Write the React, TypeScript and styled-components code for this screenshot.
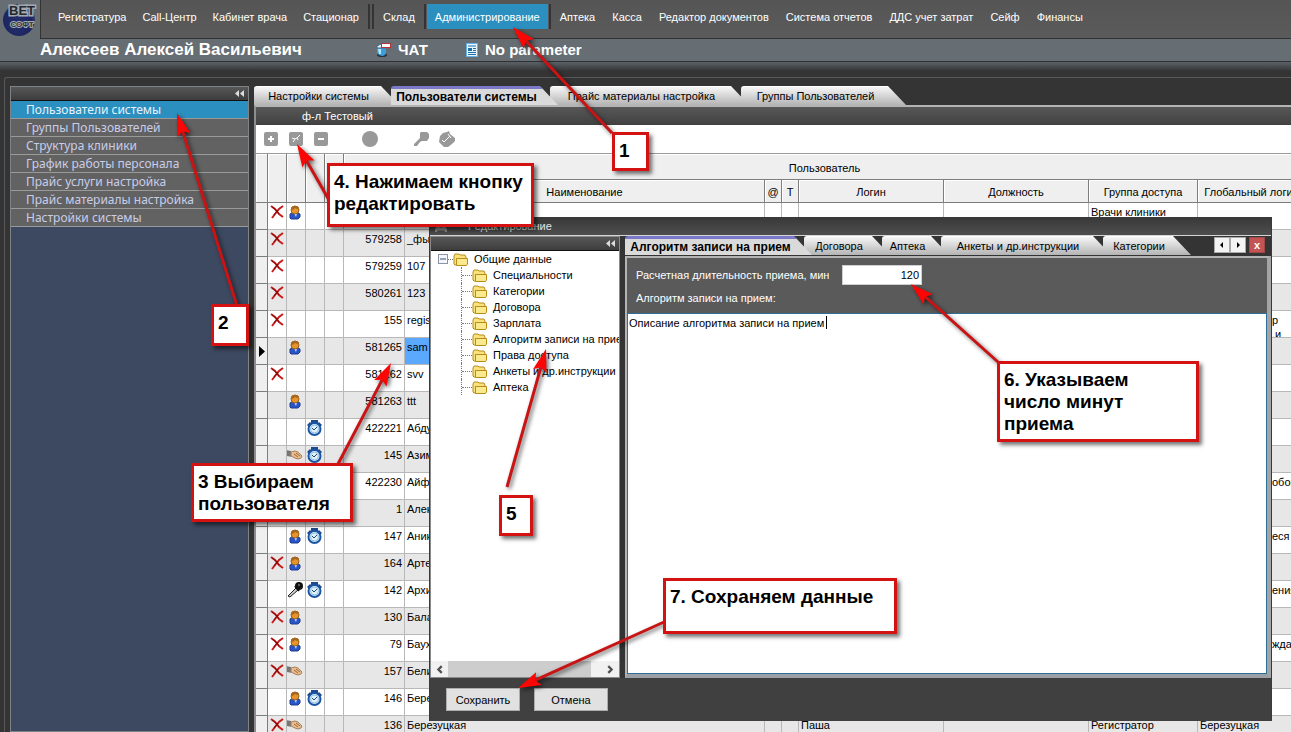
import React from "react";
import styled, { createGlobalStyle, css } from "styled-components";

const UI = '"Liberation Sans", Arial, sans-serif';
const HUMANIST = '"Noto Sans", "Open Sans", sans-serif';

const GlobalStyle = createGlobalStyle`
  *, *::before, *::after { box-sizing: border-box; }
  html, body { margin: 0; padding: 0; }
  body { font: 11px/14px ${UI}; color: #000; background: #343434; overflow: hidden; }
  button, input, textarea { font: inherit; color: inherit; margin: 0; border-radius: 0; }
  button { cursor: pointer; }
  svg { flex: none; }
  ul { list-style: none; margin: 0; padding: 0; }
`;

/* ---------- application frame ---------- */

const Page = styled.div`
  position: relative;
  display: flex;
  flex-direction: column;
  height: 100vh;
  overflow: hidden;
`;

const Header = styled.header`
  display: grid;
  grid-template-columns: 40px minmax(0, 1fr);
  grid-template-rows: 39px 22px 10px;
  background: #666e73;
`;

const LogoBox = styled.div`
  grid-row: 1 / 3;
  svg { display: block; }
`;

const Nav = styled.nav`
  display: flex;
  align-items: flex-start;
  padding: 4px 0 0 9px;
  overflow: hidden;
  background: linear-gradient(#555, #5b5b5b);
  border-left: 1px solid #333;
  border-bottom: 1px solid #2f3133;
`;

const NavGroup = styled.div<{ $gap?: number }>`
  display: flex;
  gap: ${(p) => p.$gap ?? 0}px;
`;

const NavButton = styled.button<{ $active?: boolean }>`
  height: 25px;
  padding: 0 8px;
  border: 0;
  white-space: nowrap;
  color: #fff;
  background: ${(p) => (p.$active ? "#2b8fbf" : "transparent")};
`;

const NavDivider = styled.span`
  width: 2px;
  height: 25px;
  margin: 0 1px;
  background: #343434;
`;

const StatusRow = styled.div`
  display: flex;
  align-items: center;
  color: #fff;
  font-weight: bold;
`;

const UserName = styled.div`
  width: 336px;
  font-size: 17px;
  line-height: 20px;
  white-space: nowrap;
`;

const StatusItem = styled.div<{ $width: number }>`
  display: flex;
  align-items: center;
  gap: 7px;
  width: ${(p) => p.$width}px;
  font-size: 15px;
  line-height: 20px;
  white-space: nowrap;
`;

const HeaderShade = styled.div`
  grid-column: 1 / 3;
  border-top: 1px solid #2d2f31;
  background: linear-gradient(#5c6268, #343434);
`;

const Workspace = styled.main`
  display: flex;
  flex: 1;
  min-height: 0;
  gap: 5px;
  margin: 6px 0 0 4px;
  padding: 8px 0 0 5px;
  border: 1px solid #595959;
  border-width: 1px 0 0 1px;
  border-radius: 3px 0 0 0;
`;

/* ---------- side menu ---------- */

const Sidebar = styled.aside`
  flex: 0 0 239px;
  border: 1px solid #7e8388;
  background: #3d4960;
`;

const PanelHead = styled.div`
  display: flex;
  align-items: center;
  justify-content: flex-end;
  height: 14px;
  padding-right: 4px;
  border-bottom: 1px solid #111;
  background: linear-gradient(#575757, #3d3d3d);
`;

const CollapseButton = styled.button`
  display: flex;
  padding: 0;
  border: 0;
  background: none;
`;

const MenuItem = styled.button<{ $active?: boolean }>`
  display: block;
  width: 100%;
  height: 18px;
  padding: 0 15px;
  border: 0;
  border-bottom: 1px solid #9a9a9a;
  text-align: left;
  font-family: ${HUMANIST};
  font-size: 12px;
  line-height: 16px;
  color: ${(p) => (p.$active ? "#e6f3ff" : "#c9cdea")};
  background: ${(p) => (p.$active ? "#2b8fbf" : "#626262")};
`;

/* ---------- tabs ---------- */

const Content = styled.section`
  display: flex;
  flex-direction: column;
  flex: 1;
  min-width: 0;
`;

const TabStrip = styled.div`
  display: flex;
  height: 19px;
  isolation: isolate;
`;

const Tab = styled.button<{ $width: number; $active?: boolean; $order: number }>`
  flex: 0 0 ${(p) => p.$width}px;
  height: 19px;
  padding: 0 16px 0 0;
  border: 0;
  border-top: 1px solid #fff;
  border-radius: 3px 0 0 0;
  white-space: nowrap;
  background: linear-gradient(#f6f6f6, #b4b4b4);
  clip-path: polygon(0 0, calc(100% - 18px) 0, 100% 100%, 0 100%);
  z-index: ${(p) => 10 - p.$order};
  & + & { margin-left: -8px; }
  ${(p) =>
    p.$active &&
    css`
      z-index: 20;
      border-top: 3px solid #7b78c8;
      font-size: 12px;
      font-weight: bold;
      background: #dadada;
    `}
`;

const ListPane = styled.div`
  display: flex;
  flex-direction: column;
  flex: 1;
  min-height: 0;
  border-left: 2px solid #8d8d8d;
  border-top: 2px solid #b4b4b4;
  background: #fff;
`;

const BranchBar = styled.div`
  height: 18px;
  padding-left: 46px;
  line-height: 18px;
  color: #fff;
  background: linear-gradient(#575757, #414141);
`;

const Toolbar = styled.div`
  display: flex;
  align-items: center;
  height: 28px;
  padding-left: 8px;
`;

const ToolButton = styled.button<{ $space: number }>`
  display: flex;
  padding: 0;
  margin-right: ${(p) => p.$space}px;
  border: 0;
  background: none;
`;

/* ---------- users table ---------- */

const TableArea = styled.div`
  flex: 1;
  min-height: 0;
  overflow: hidden;
  border-top: 1px solid #9a9a9a;
`;

const UsersTable = styled.table`
  width: 1050px;
  min-width: 100%;
  table-layout: fixed;
  border-collapse: separate;
  border-spacing: 0;
`;

const HeadCell = styled.th`
  padding: 2px 0 0;
  border-right: 1px solid #7d7d7d;
  border-bottom: 1px solid #7d7d7d;
  box-shadow: inset 1px 1px #fff;
  background: #efefef;
  font-weight: normal;
  white-space: nowrap;
`;

const Row = styled.tr<{ $shaded: boolean }>`
  height: 27px;
  background: ${(p) => (p.$shaded ? "#e7e7e7" : "#fff")};
`;

const Cell = styled.td<{ $kind?: "mark" | "icon" | "number"; $selected?: boolean }>`
  height: 27px;
  padding: 2px 2px 0;
  overflow: hidden;
  white-space: nowrap;
  vertical-align: top;
  border-right: 1px solid #b8b8b8;
  border-bottom: 1px solid #b8b8b8;
  svg { display: block; }
  ${(p) =>
    p.$kind === "mark" &&
    css`
      padding: 0 3px;
      vertical-align: middle;
      border-color: #7d7d7d;
      background: #efefef;
    `}
  ${(p) => p.$kind === "icon" && css`padding: 0;`}
  ${(p) => p.$kind === "number" && css`text-align: right;`}
  ${(p) => p.$selected && css`background: #5aa9ff;`}
`;

const Tail = styled.span`
  display: block;
  height: 24px;
  padding-left: 72px;
  white-space: pre;
`;

/* ---------- edit window ---------- */

const Dialog = styled.section`
  position: absolute;
  left: 429px;
  right: 19px;
  top: 217px;
  bottom: 11px;
  display: flex;
  flex-direction: column;
  border: 1px solid #3a3a3a;
  border-width: 0 1px;
  background: #404040;
`;

const TitleBar = styled.div`
  display: flex;
  align-items: center;
  height: 19px;
  gap: 21px;
  padding-left: 5px;
  color: #e4e4e4;
  border-bottom: 1px solid #d5d5d5;
  background: linear-gradient(#383838, #4e4e4e);
`;

const DialogBody = styled.div`
  display: flex;
  flex: 1;
  min-height: 0;
  gap: 5px;
  background: #343434;
`;

const TreePane = styled.div`
  display: flex;
  flex-direction: column;
  flex: 0 0 190px;
  overflow: hidden;
  border: 1px solid #8a8a8a;
  background: #fff;
`;

const Tree = styled.div`
  flex: 1;
  overflow: hidden;
`;

const TreeRoot = styled.div`
  display: flex;
  align-items: center;
  height: 16px;
  padding-left: 7px;
`;

const Dots = styled.span<{ $width: number }>`
  flex: 0 0 ${(p) => p.$width}px;
  border-top: 1px dotted #777;
`;

const Branch = styled.ul`
  margin-left: 30px;
`;

const Leaf = styled.li`
  display: flex;
  align-items: center;
  height: 16px;
  white-space: nowrap;
  border-left: 1px dotted #777;
`;

const NodeLabel = styled.span`
  padding-left: 6px;
`;

const HScroll = styled.div`
  display: grid;
  grid-template-columns: 17px 143px 1fr 17px;
  height: 16px;
  background: #f1f1f1;
`;

const ScrollButton = styled.button`
  display: flex;
  align-items: center;
  justify-content: center;
  grid-row: 1;
  padding: 0;
  border: 0;
  background: none;
  &:last-child { grid-column: 4; }
`;

const Thumb = styled.div`
  background: #cdcdcd;
`;

const EditorPane = styled.div`
  display: flex;
  flex-direction: column;
  flex: 1;
  min-width: 0;
`;

const TabLine = styled.div`
  display: flex;
  justify-content: space-between;
  padding-right: 6px;
`;

const TabControls = styled.div`
  display: flex;
  padding-top: 1px;
`;

const SmallButton = styled.button<{ $close?: boolean }>`
  display: flex;
  align-items: center;
  justify-content: center;
  width: 16px;
  height: 16px;
  padding: 0;
  border: 1px solid #a9a9a9;
  background: #f4f4f4;
  ${(p) =>
    p.$close &&
    css`
      margin-left: 3px;
      border-color: #a04747;
      color: #fff;
      font-weight: bold;
      line-height: 12px;
      background: #c25454;
    `}
`;

const Editor = styled.div`
  display: flex;
  flex-direction: column;
  flex: 1;
  min-height: 0;
  margin-top: 1px;
  border: 2px solid #b4b4b4;
  border-right: 4px solid #a4a4a4;
  border-bottom: 4px solid #9aa0a6;
  background: #5a5a5a;
`;

const Fields = styled.div`
  display: grid;
  grid-template-columns: 197px 80px;
  column-gap: 9px;
  row-gap: 6px;
  align-items: center;
  padding: 7px 0 8px 9px;
  color: #fff;
  label { white-space: nowrap; }
`;

const MinutesInput = styled.input`
  width: 80px;
  height: 20px;
  padding: 0 2px;
  border: 1px solid #cfcfcf;
  text-align: right;
  color: #000;
  background: #fff;
`;

const NotesWrap = styled.div`
  position: relative;
  display: flex;
  flex: 1;
`;

const Notes = styled.textarea`
  flex: 1;
  padding: 2px 1px;
  border: 1px solid #2d6f96;
  outline: 0;
  resize: none;
  background: #fff;
`;

const Caret = styled.span`
  position: absolute;
  left: 199px;
  top: 3px;
  width: 1px;
  height: 13px;
  background: #000;
`;

const DialogFooter = styled.footer`
  display: flex;
  gap: 14px;
  padding: 10px 16px;
`;

const ActionButton = styled.button`
  width: 74px;
  height: 23px;
  padding: 0;
  border: 1px solid #adadad;
  background: #e1e1e1;
`;

/* ---------- instruction notes ---------- */

const Arrows = styled.svg`
  position: absolute;
  left: 0;
  top: 0;
  pointer-events: none;
  filter: drop-shadow(2px 2px 2px rgba(0, 0, 0, 0.6));
`;

const Callout = styled.div<{ $x: number; $y: number; $w: number; $h: number }>`
  position: absolute;
  left: ${(p) => p.$x}px;
  top: ${(p) => p.$y}px;
  width: ${(p) => p.$w}px;
  height: ${(p) => p.$h}px;
  padding: 5px 4px;
  border: 3px solid #d41212;
  background: #fff;
  box-shadow: 3px 3px 4px rgba(0, 0, 0, 0.55);
  font-size: 19px;
  line-height: 22px;
  font-weight: bold;
  white-space: pre;
`;

/* ---------- icons ---------- */

const Logo = () => (
  <svg width="40" height="40" viewBox="0 0 40 40" role="img" aria-label="ВЕТ СОФТ">
    <defs>
      <radialGradient id="ball" cx="45%" cy="60%" r="60%">
        <stop offset="0" stopColor="#26306f" />
        <stop offset="0.75" stopColor="#1d2560" />
        <stop offset="1" stopColor="#38406c" />
      </radialGradient>
    </defs>
    <circle cx="19" cy="20" r="16" fill="url(#ball)" />
    <g fontFamily='"Liberation Sans Narrow", "Liberation Sans", sans-serif' fontWeight="bold" textAnchor="middle" paintOrder="stroke">
      <text x="22" y="15" fontSize="13" fill="#24272d" stroke="#a4aab0" strokeWidth="3">ВЕТ</text>
      <text x="22" y="27" fontSize="8" fill="#30343c" stroke="#a4aab0" strokeWidth="2">СОФТ</text>
    </g>
  </svg>
);

const ChatIcon = () => (
  <svg width="15" height="16" viewBox="0 0 15 16">
    <ellipse cx="6" cy="13" rx="5" ry="2" fill="#2b3036" />
    <path d="M1 6h9v5q-1 3-4 3t-5-3z" fill="#3aa0dc" />
    <path d="M2 7h3v5H3z" fill="#b7e6fb" />
    <path d="M1 4l4-2 5 1v3H1z" fill="#e7f3fa" stroke="#3c6a8a" strokeWidth="1" />
    <rect x="5.500" y="1.500" width="9" height="4" fill="#fff" stroke="#b4323a" />
  </svg>
);

const DocIcon = () => (
  <svg width="12" height="14" viewBox="0 0 12 14">
    <rect x="0.500" y="0.500" width="11" height="13" fill="#e8f6ff" stroke="#62b0e2" />
    <path d="M2 3h8M7 5.500h3M7 7.500h3M2 9.500h8M2 11.500h8" stroke="#1f6ea8" />
    <rect x="2" y="5" width="4" height="3" fill="#1f6ea8" />
  </svg>
);

const Chevrons = () => (
  <svg width="9" height="7" viewBox="0 0 9 7">
    <path d="M4 0v7L0 3.500zM9 0v7L5 3.500z" fill="#dcdcdc" />
  </svg>
);

const SquareTool = ({ mark }: { mark: string }) => (
  <svg width="14" height="14" viewBox="0 0 14 14">
    <rect width="14" height="14" rx="2" fill="#999" />
    <path d={mark} fill="none" stroke="#fff" strokeWidth="2" />
  </svg>
);

const PencilTool = () => (
  <svg width="14" height="14" viewBox="0 0 14 14">
    <rect width="14" height="14" rx="2" fill="#999" />
    <path d="M3 6l3 1 2-1 3-3M6 7l-2 3M8 6l1 2" fill="none" stroke="#fff" strokeWidth="1" />
  </svg>
);

const CircleTool = () => (
  <svg width="16" height="16" viewBox="0 0 16 16">
    <circle cx="8" cy="8" r="8" fill="#999" />
  </svg>
);

const KeyTool = () => (
  <svg width="17" height="16" viewBox="0 0 17 16">
    <path d="M8 1h6l2 2v4l-2 3h-5l-2 1-3 4H1v-2l6-6V2z" fill="#999" />
  </svg>
);

const TagTool = () => (
  <svg width="16" height="16" viewBox="0 0 16 16">
    <path d="M1 5l3-3 4-1 2-1 1 3 5 4v3l-3 3-4 3H5l-2-2-3-3z" fill="#999" />
    <path d="M3 9l2 2 6-6M9 3l3 4" fill="none" stroke="#fff" />
  </svg>
);

const CrossIcon = () => (
  <svg width="18" height="17" viewBox="0 0 18 17">
    <path d="M3 3l4 3 4 5 4 3M15 3l-4 3-4 5-3 4" fill="none" stroke="#c81c1c" strokeWidth="2" />
    <path d="M4 4l4 3 3 4M10 7l-4 5" fill="none" stroke="#7c0808" strokeWidth="1" />
  </svg>
);

const PersonIcon = () => (
  <svg width="16" height="18" viewBox="0 0 16 18">
    <path d="M3 15v-4l2-1h6l2 1v3l-2 2H4z" fill="#2a55c8" stroke="#1c3c90" strokeWidth="1" />
    <path d="M7 10h3l-1 4z" fill="#dfe9ff" />
    <circle cx="8" cy="7" r="4" fill="#e8942c" stroke="#94601e" strokeWidth="1" />
    <path d="M4 7q0-4 4-4t4 3q-3 0-4-1-1 2-4 2z" fill="#a8671e" />
  </svg>
);

const ClockIcon = () => (
  <svg width="17" height="18" viewBox="0 0 17 18">
    <path d="M5 1h7v3H5zM1 6l3-3 2 2-3 3zM16 6l-3-3-2 2 3 3z" fill="#1d4a8c" />
    <circle cx="8.500" cy="10" r="6" fill="#dff1fb" stroke="#1c55a4" strokeWidth="2" />
    <circle cx="8.500" cy="10" r="4" fill="none" stroke="#8cc0e4" strokeWidth="1" />
    <path d="M11 8l-3 3-2-2" fill="none" stroke="#24466d" strokeWidth="1" />
  </svg>
);

const HandIcon = () => (
  <svg width="16" height="17" viewBox="0 0 16 17">
    <path d="M0 4l4 1v6l-4-1z" fill="#8d8d8d" />
    <path d="M1 5v5M3 5v5" stroke="#5f5f5f" strokeWidth="1" />
    <path d="M4 6l4-1 3 1 4 4-1 2-3 1-3-1-4-2z" fill="#e9bd8d" stroke="#a8805a" strokeWidth="1" />
    <path d="M7 8l4 3M9 7l4 3" stroke="#96683c" strokeWidth="1" />
  </svg>
);

const MicIcon = () => (
  <svg width="17" height="18" viewBox="0 0 17 18">
    <path d="M1 15L9 7l2 2-8 7z" fill="#c9c9c9" stroke="#222" strokeWidth="1" />
    <circle cx="12" cy="5" r="4" fill="#111" />
    <path d="M8 5l4 5" stroke="#111" strokeWidth="2" />
    <circle cx="12" cy="4" r="1" fill="#777" />
  </svg>
);

const FolderIcon = () => (
  <svg width="15" height="13" viewBox="0 0 15 13">
    <path d="M1 11V3l1-2h4l1 1h5l1 2v7l-1 1H2z" fill="#f7e27e" stroke="#b98d16" strokeWidth="1" />
    <path d="M3.500 12V5.500h11V11l-1 1.500h-10z" fill="#fbe98f" stroke="#b98d16" strokeWidth="1" />
  </svg>
);

const MinusBox = () => (
  <svg width="10" height="10" viewBox="0 0 10 10">
    <rect x="0.500" y="0.500" width="9" height="9" fill="#f4f6fa" stroke="#8a94a2" />
    <path d="M2 5h6" stroke="#33507c" />
  </svg>
);

const Glyph = ({ d, size, line }: { d: string; size: number; line?: string }) => (
  <svg width={size} height={size} viewBox="0 0 8 8">
    <path d={d} fill={line ? "none" : "#000"} stroke={line ?? "none"} strokeWidth={line ? 2 : 0} />
  </svg>
);

const RowPointer = () => (
  <svg width="6" height="11" viewBox="0 0 6 11">
    <path d="M0 0l6 5.500L0 11z" fill="#000" />
  </svg>
);

/* ---------- data ---------- */

const icons = { cross: <CrossIcon />, person: <PersonIcon />, clock: <ClockIcon />, hand: <HandIcon />, mic: <MicIcon /> };
type IconName = keyof typeof icons;

interface User {
  id: string;
  name: string;
  marks: [IconName | null, IconName | null, IconName | null];
  login?: string;
  group?: string;
  globalLogin?: string;
  tail?: string;
  current?: boolean;
}

const users: User[] = [
  { id: "", name: "", marks: ["cross", "person", null], group: "Врачи клиники" },
  { id: "579258", name: "_фы", marks: ["cross", null, null] },
  { id: "579259", name: "107", marks: ["cross", null, null] },
  { id: "580261", name: "123", marks: ["cross", null, null] },
  { id: "155", name: "regis", marks: ["cross", null, null], tail: "р\n.и" },
  { id: "581265", name: "sam", marks: [null, "person", null], current: true },
  { id: "581262", name: "svv", marks: ["cross", null, null] },
  { id: "581263", name: "ttt", marks: [null, "person", null] },
  { id: "422221", name: "Абду", marks: [null, null, "clock"] },
  { id: "145", name: "Азим", marks: [null, "hand", "clock"] },
  { id: "422230", name: "Айф", marks: [null, null, null], tail: "обов" },
  { id: "1", name: "Алек", marks: [null, null, null] },
  { id: "147", name: "Аник", marks: [null, "person", "clock"], tail: "еся" },
  { id: "164", name: "Арте", marks: ["cross", "person", null] },
  { id: "142", name: "Архи", marks: [null, "mic", "clock"], tail: "ения" },
  { id: "130", name: "Бала", marks: ["cross", "person", null] },
  { id: "79", name: "Баух", marks: ["cross", "person", null], tail: "жда" },
  { id: "157", name: "Бели", marks: ["cross", "hand", null] },
  { id: "146", name: "Бере", marks: [null, "person", "clock"] },
  { id: "136", name: "Березуцкая", marks: ["cross", "hand", null], login: "Паша", group: "Регистратор", globalLogin: "Березуцкая" },
];

const columnWidths = [12, 19, 19, 19, 19, 61, 360, 17, 17, 145, 145, 109, 108];
const nestedHeads = ["", "Наименование", "@", "Т", "Логин", "Должность", "Группа доступа", "Глобальный логин"];

const menu = [
  "Пользователи системы",
  "Группы Пользователей",
  "Структура клиники",
  "График работы персонала",
  "Прайс услуги настройка",
  "Прайс материалы настройка",
  "Настройки системы",
];

const pageTabs = [
  { label: "Настройки системы", width: 145 },
  { label: "Пользователи системы", width: 167, active: true },
  { label: "Прайс материалы настройка", width: 199 },
  { label: "Группы Пользователей", width: 165 },
];

const dialogTabs = [
  { label: "Алгоритм записи на прием", width: 187, active: true },
  { label: "Договора", width: 86 },
  { label: "Аптека", width: 67 },
  { label: "Анкеты и др.инструкции", width: 170 },
  { label: "Категории", width: 88 },
];

const sections = [
  "Специальности",
  "Категории",
  "Договора",
  "Зарплата",
  "Алгоритм записи на прием",
  "Права доступа",
  "Анкеты и др.инструкции",
  "Аптека",
];

const arrows: [number, number, number, number][] = [
  [612, 133, 513, 27],
  [237, 306, 177, 113],
  [338, 464, 391, 363],
  [329, 200, 297, 144],
  [507, 487, 546, 349],
  [998, 362, 911, 284],
  [664, 622, 518, 688],
];

const callouts = [
  { x: 612, y: 132, w: 37, h: 39, text: "1" },
  { x: 211, y: 304, w: 38, h: 42, text: "2" },
  { x: 191, y: 463, w: 162, h: 59, text: "3 Выбираем\nпользователя" },
  { x: 327, y: 163, w: 207, h: 64, text: "4. Нажимаем кнопку\nредактировать" },
  { x: 499, y: 495, w: 34, h: 41, text: "5" },
  { x: 997, y: 361, w: 202, h: 81, text: "6. Указываем\nчисло минут\nприема" },
  { x: 663, y: 578, w: 234, h: 56, text: "7. Сохраняем данные" },
];

/* ---------- composed parts ---------- */

const Arrow = ({ from }: { from: [number, number, number, number] }) => {
  const [x1, y1, x2, y2] = from;
  const len = Math.hypot(x2 - x1, y2 - y1);
  const ux = (x2 - x1) / len;
  const uy = (y2 - y1) / len;
  const bx = x2 - ux * 23;
  const by = y2 - uy * 23;
  const nx = x2 - ux * 19;
  const ny = y2 - uy * 19;
  const points = `${x2},${y2} ${bx - uy * 7},${by + ux * 7} ${nx},${ny} ${bx + uy * 7},${by - ux * 7}`;
  return (
    <g>
      <line x1={x1} y1={y1} x2={nx} y2={ny} stroke="#c81414" strokeWidth="3" />
      <polygon points={points} fill="#fb0505" />
    </g>
  );
};

const Tabs = ({ items }: { items: { label: string; width: number; active?: boolean }[] }) => (
  <TabStrip role="tablist">
    {items.map((t, i) => (
      <Tab key={t.label} role="tab" aria-selected={!!t.active} $width={t.width} $active={t.active} $order={i}>
        {t.label}
      </Tab>
    ))}
  </TabStrip>
);

const Users = () => (
  <UsersTable>
    <colgroup>
      {columnWidths.map((w, i) => (
        <col key={i} width={w} />
      ))}
    </colgroup>
    <thead>
      <tr>
        {[0, 1, 2, 3, 4].map((i) => (
          <HeadCell key={i} rowSpan={2} />
        ))}
        <HeadCell colSpan={8} height={26}>Пользователь</HeadCell>
      </tr>
      <tr>
        {nestedHeads.map((h, i) => (
          <HeadCell key={i} height={23}>{h}</HeadCell>
        ))}
      </tr>
    </thead>
    <tbody>
      {users.map((u, i) => (
        <Row key={i} $shaded={i % 2 === 1}>
          <Cell $kind="mark">{u.current && <RowPointer />}</Cell>
          {u.marks.map((m, j) => (
            <Cell key={j} $kind="icon">{m && icons[m]}</Cell>
          ))}
          <Cell />
          <Cell $kind="number">{u.id}</Cell>
          <Cell $selected={u.current}>{u.name}</Cell>
          <Cell />
          <Cell />
          <Cell>{u.login}</Cell>
          <Cell />
          <Cell>{u.group}</Cell>
          <Cell>{u.tail ? <Tail>{u.tail}</Tail> : u.globalLogin}</Cell>
        </Row>
      ))}
    </tbody>
  </UsersTable>
);

const EditDialog = () => (
  <Dialog role="dialog" aria-label="Редактирование">
    <TitleBar>
      <Glyph d="M0 8l4-6 4 6M2 6h4" size={12} line="#8a8a8a" />
      <span>Редактирование</span>
    </TitleBar>
    <DialogBody>
      <TreePane>
        <PanelHead>
          <CollapseButton aria-label="Свернуть"><Chevrons /></CollapseButton>
        </PanelHead>
        <Tree>
          <TreeRoot>
            <MinusBox />
            <Dots $width={5} />
            <FolderIcon />
            <NodeLabel>Общие данные</NodeLabel>
          </TreeRoot>
          <Branch>
            {sections.map((s) => (
              <Leaf key={s}>
                <Dots $width={10} />
                <FolderIcon />
                <NodeLabel>{s}</NodeLabel>
              </Leaf>
            ))}
          </Branch>
        </Tree>
        <HScroll>
          <ScrollButton aria-label="Влево"><Glyph d="M6 1L3 4l3 3" size={9} line="#505050" /></ScrollButton>
          <Thumb />
          <ScrollButton aria-label="Вправо"><Glyph d="M2 1l3 3-3 3" size={9} line="#505050" /></ScrollButton>
        </HScroll>
      </TreePane>
      <EditorPane>
        <TabLine>
          <Tabs items={dialogTabs} />
          <TabControls>
            <SmallButton aria-label="Предыдущая"><Glyph d="M5 1v6L2 4z" size={8} /></SmallButton>
            <SmallButton aria-label="Следующая"><Glyph d="M3 1v6l3-3z" size={8} /></SmallButton>
            <SmallButton $close>x</SmallButton>
          </TabControls>
        </TabLine>
        <Editor>
          <Fields>
            <label htmlFor="minutes">Расчетная длительность приема, мин</label>
            <MinutesInput id="minutes" defaultValue="120" />
            <label htmlFor="notes">Алгоритм записи на прием:</label>
          </Fields>
          <NotesWrap>
            <Notes id="notes" spellCheck={false} defaultValue="Описание алгоритма записи на прием" />
            <Caret />
          </NotesWrap>
        </Editor>
      </EditorPane>
    </DialogBody>
    <DialogFooter>
      <ActionButton>Сохранить</ActionButton>
      <ActionButton>Отмена</ActionButton>
    </DialogFooter>
  </Dialog>
);

export default function App() {
  return (
    <>
      <GlobalStyle />
      <Page>
        <Header>
          <LogoBox><Logo /></LogoBox>
          <Nav>
            <NavGroup>
              <NavButton>Регистратура</NavButton>
              <NavButton>Call-Центр</NavButton>
              <NavButton>Кабинет врача</NavButton>
              <NavButton>Стационар</NavButton>
            </NavGroup>
            <NavDivider />
            <NavDivider />
            <NavButton>Склад</NavButton>
            <NavDivider />
            <NavButton $active>Администрирование</NavButton>
            <NavDivider />
            <NavGroup $gap={1}>
              <NavButton>Аптека</NavButton>
              <NavButton>Касса</NavButton>
              <NavButton>Редактор документов</NavButton>
              <NavButton>Система отчетов</NavButton>
              <NavButton>ДДС учет затрат</NavButton>
              <NavButton>Сейф</NavButton>
              <NavButton>Финансы</NavButton>
            </NavGroup>
          </Nav>
          <StatusRow>
            <UserName>Алексеев Алексей Васильевич</UserName>
            <StatusItem $width={90}><ChatIcon />ЧАТ</StatusItem>
            <StatusItem $width={140}><DocIcon />No parameter</StatusItem>
          </StatusRow>
          <HeaderShade />
        </Header>
        <Workspace>
          <Sidebar>
            <PanelHead>
              <CollapseButton aria-label="Свернуть"><Chevrons /></CollapseButton>
            </PanelHead>
            {menu.map((m, i) => (
              <MenuItem key={m} $active={i === 0}>{m}</MenuItem>
            ))}
          </Sidebar>
          <Content>
            <Tabs items={pageTabs} />
            <ListPane>
              <BranchBar>ф-л Тестовый</BranchBar>
              <Toolbar>
                <ToolButton $space={11} aria-label="Добавить"><SquareTool mark="M4 7h6M7 4v6" /></ToolButton>
                <ToolButton $space={11} aria-label="Редактировать"><PencilTool /></ToolButton>
                <ToolButton $space={34} aria-label="Удалить"><SquareTool mark="M4 7h6" /></ToolButton>
                <ToolButton $space={35} aria-label="Состояние"><CircleTool /></ToolButton>
                <ToolButton $space={9} aria-label="Пароль"><KeyTool /></ToolButton>
                <ToolButton $space={0} aria-label="Метка"><TagTool /></ToolButton>
              </Toolbar>
              <TableArea><Users /></TableArea>
            </ListPane>
          </Content>
        </Workspace>
        <EditDialog />
        <Arrows width="1291" height="732">
          {arrows.map((a, i) => (
            <Arrow key={i} from={a} />
          ))}
        </Arrows>
        {callouts.map((c) => (
          <Callout key={c.text} $x={c.x} $y={c.y} $w={c.w} $h={c.h}>{c.text}</Callout>
        ))}
      </Page>
    </>
  );
}
